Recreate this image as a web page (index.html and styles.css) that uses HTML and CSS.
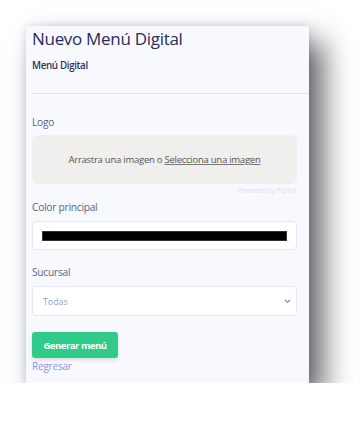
FILE: index.html
```html
<!DOCTYPE html>
<html lang="es">
<head>
<meta charset="utf-8">
<title>Nuevo Menú Digital</title>
<link rel="stylesheet" href="styles.css">
</head>
<body>
<div class="panel">
  <h1 class="title">Nuevo Menú Digital</h1>
  <div class="subtitle">Menú Digital</div>
  <hr class="divider">
  <label class="label label-logo">Logo</label>
  <div class="dropzone">
    <span>Arrastra una imagen o <u>Selecciona una imagen</u></span>
  </div>
  <div class="powered">Powered by PQINA</div>
  <label class="label">Color principal</label>
  <div class="field color-field"><div class="swatch"></div></div>
  <label class="label label-suc">Sucursal</label>
  <div class="field select-field">
    <span class="placeholder">Todas</span>
    <svg class="chev" width="7" height="5" viewBox="0 0 7 5"><path d="M1 1 L3.5 3.5 L6 1" fill="none" stroke="#8a8fa3" stroke-width="1.2"/></svg>
  </div>
  <button class="btn">Generar menú</button>
  <a class="back" href="#">Regresar</a>
</div>
</body>
</html>
```
FILE: styles.css
```css
html, body {
  margin: 0;
  padding: 0;
  background: #ffffff;
}
body {
  font-family: "Open Sans", "Noto Sans", sans-serif;
}
.panel {
  margin: 26px 0 0 26px;
  width: 265px;
  height: 356px;
  padding: 1px 12px 0 6px;
  background: #f8f9fe;
  box-shadow: 14px 16px 28px rgba(0,0,0,0.62), 0 0 8px rgba(0,0,0,0.12);
  display: flex;
  flex-direction: column;
  overflow: hidden;
}
.title {
  margin: 0;
  font-size: 17px;
  line-height: 24px;
  font-weight: 400;
  letter-spacing: -0.3px;
  color: #2a2c58;
}
.subtitle {
  margin-top: 8px;
  font-size: 9.8px;
  line-height: 14px;
  font-weight: 600;
  letter-spacing: -0.35px;
  color: #2f3260;
}
.divider {
  margin: 20px -12px 0 0;
  border: 0;
  height: 1px;
  background: #e2e3ea;
}
.label {
  display: block;
  font-size: 10.2px;
  line-height: 15px;
  letter-spacing: -0.25px;
  color: #5d6280;
}
.label-logo {
  margin-top: 21px;
}
.dropzone {
  margin-top: 5px;
  height: 49px;
  background: #f0efed;
  border-radius: 6px;
  display: flex;
  align-items: center;
  justify-content: center;
  font-size: 9.5px;
  letter-spacing: -0.25px;
  color: #555555;
}
.dropzone u {
  text-decoration-color: #777;
}
.powered {
  text-align: right;
  font-size: 7px;
  line-height: 14px;
  letter-spacing: -0.1px;
  color: #dfe0e6;
  margin-bottom: 2px;
}
.field {
  margin-top: 6px;
  height: 27px;
  background: #ffffff;
  border: 1px solid #e7e8ef;
  border-radius: 4px;
  display: flex;
  align-items: center;
}
.color-field {
  padding: 0 9px;
}
.swatch {
  flex: 1;
  height: 10px;
  background: #000000;
  border: 1px solid #333;
  box-sizing: border-box;
}
.label-suc {
  margin-top: 15px;
}
.select-field {
  height: 28px;
  padding: 0 5px 0 10px;
  justify-content: space-between;
}
.placeholder {
  font-size: 9px;
  letter-spacing: -0.1px;
  color: #9ca1b6;
}
.chev {
  display: block;
}
.btn {
  margin-top: 16px;
  align-self: flex-start;
  width: 86px;
  height: 26px;
  border: 0;
  border-radius: 3px;
  background: #2ecc88;
  color: #ffffff;
  font-family: "Open Sans", "Noto Sans", sans-serif;
  font-weight: 700;
  font-size: 9.5px;
  letter-spacing: -0.45px;
  padding: 0;
  box-shadow: 0 2px 4px rgba(0,0,0,0.12);
}
.back {
  align-self: flex-start;
  font-size: 10px;
  line-height: 15px;
  letter-spacing: -0.2px;
  color: #8c90ec;
  text-decoration: none;
  margin-top: 1px;
}
```
